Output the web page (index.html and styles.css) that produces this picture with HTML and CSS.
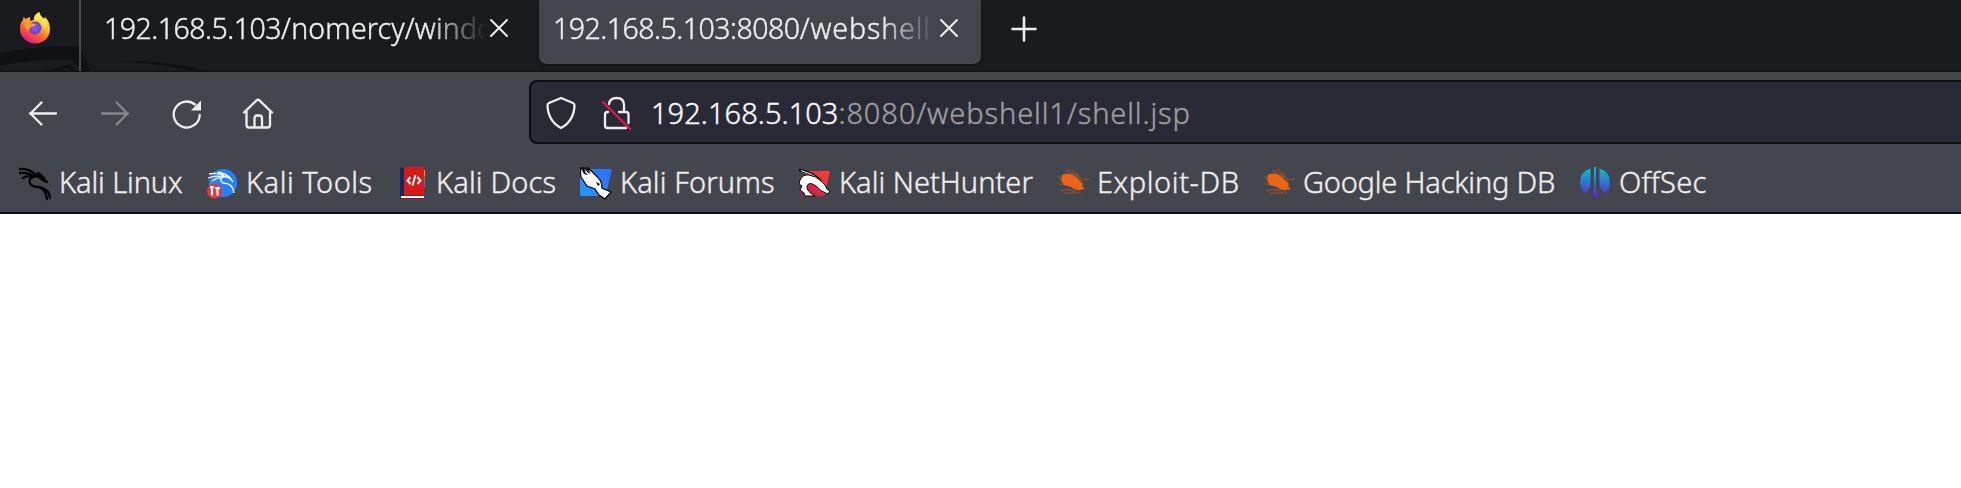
FILE: index.html
```html
<!DOCTYPE html>
<html lang="en">
<head>
<meta charset="utf-8">
<title>192.168.5.103:8080/webshell1/shell.jsp</title>
<link rel="stylesheet" href="styles.css">
</head>
<body>
<header class="tabbar">
  <svg class="dragon" width="240" height="72" viewBox="0 0 240 72"><g fill="#101114"><path d="M0 53Q42 45 80 47L91 72H83L72 60Q35 59 0 65Z"/><path d="M42 72L71 64L77 72H69L68 68L58 72Z"/><path d="M118 61Q170 60 210 72H192Q165 63 118 61Z"/></g></svg>
  <div class="pinned">
    <svg width="32" height="32" viewBox="0 0 32 32">
      <defs>
        <linearGradient id="ff" x1=".85" y1=".1" x2=".35" y2="1"><stop offset="0" stop-color="#fff04a"/><stop offset=".4" stop-color="#ffb02e"/><stop offset=".7" stop-color="#ff5a35"/><stop offset="1" stop-color="#e31587"/></linearGradient>
        <radialGradient id="fp"><stop offset="0" stop-color="#9059ff"/><stop offset="1" stop-color="#5b45c9"/></radialGradient>
      </defs>
      <path fill="url(#ff)" d="M20 0Q21 4 25 7L26 5Q31 10 31 17C31 26 24 31.500 16 31.500S1 25 1 17Q1 11 4 8L4.500 5L7 7Q10 5 11 5L11 9Q14 8 15 8Q14 3 20 0Z"/>
      <path fill="#ffe64a" d="M20 0Q21 4 25 7Q28 11 26 17Q24 9 18 8H15Q16 3 20 0Z"/>
      <circle cx="16" cy="16" r="6.500" fill="url(#fp)"/>
      <path fill="#ff9828" d="M5 11Q8 9 11 11L17 12Q16 15 12 15Q10 16 10 19Q6 16 5 11Z"/>
    </svg>
  </div>
  <div class="tab tab-idle">
    <span class="tab-title title-one">192.168.5.103<span class="path">/nomercy/windo</span></span>
    <svg class="close" width="20" height="20" viewBox="0 0 20 20"><path d="M2 2L18 18M18 2L2 18"/></svg>
  </div>
  <div class="tab tab-active">
    <span class="tab-title title-two">192.168.5.103:8080<span class="path">/webshell</span></span>
    <svg class="close" width="20" height="20" viewBox="0 0 20 20"><path d="M2 2L18 18M18 2L2 18"/></svg>
  </div>
  <svg class="plus" width="26" height="26" viewBox="0 0 26 26"><path d="M13 1.500V24.500M1.500 13H24.500"/></svg>
</header>
<nav class="navbar">
  <div class="buttons">
    <svg width="32" height="32" viewBox="0 0 32 32"><path d="M29 16.500H3M14.500 5.500L3.500 16.500L14.500 27.500"/></svg>
    <svg class="dim" width="32" height="32" viewBox="0 0 32 32"><path d="M3 16.500H29M17.500 5.500L28.500 16.500L17.500 27.500"/></svg>
    <svg width="32" height="32" viewBox="0 0 32 32"><path d="M28.700 18A13 13 0 1 1 24 7.500"/><path class="solid" d="M30 3.500V13.500H20Z"/></svg>
    <svg width="32" height="32" viewBox="0 0 32 32"><path d="M1 15.500L13.600 3.300Q15 2.100 16.400 3.300L29 15.500M3.500 14V28Q3.500 30.500 6 30.500H24.500Q27 30.500 27 28V14M11.500 30V21.500Q11.500 18.500 14 18.500H16.500Q19 18.500 19 21.500V30"/></svg>
  </div>
  <div class="urlbar">
    <svg class="shield" width="32" height="34" viewBox="0 0 32 34"><path d="M16 2L28 7Q29.500 7.700 29.500 9.500Q29 25 16 32Q3 25 2.500 9.500Q2.500 7.700 4 7Z"/></svg>
    <svg class="lock" width="30" height="34" viewBox="0 0 30 34"><path d="M8 8Q9 2 15.500 2Q23 2 23 9V15.500M18 16H25Q27.500 16 27.500 18.500V27M7 16H6.500Q4 16 4 18.500V29.500Q4 32 6.500 32H25"/><path class="slash" d="M2 6L29 33"/></svg>
    <span class="address"><span class="host">192.168.5.103</span>:8080/webshell1/shell.jsp</span>
  </div>
</nav>
<div class="bookmarks">
  <div class="bm bm-linux">
    <svg width="32" height="34" viewBox="0 0 32 34"><g fill="none" stroke="#000" stroke-linecap="round" stroke-width="2.300"><path d="M1 2Q10 1 18 9M1 6Q8 5 15 9M4 11Q9 8 14 10M18 9Q9 10 11 16Q12 20 20 20Q30 22 31 31"/><path d="M20 20Q27 23 28 32M13 10Q20 7 28 15M19 6L25 11"/></g><path d="M17 6L29 15L27 16L20 12Z"/></svg>
    <span>Kali Linux</span>
  </div>
  <div class="bm bm-tools">
    <svg width="32" height="34" viewBox="0 0 32 34"><circle cx="16" cy="16" r="14" fill="#2580fb"/><g fill="none" stroke="#fff" stroke-width="1.300"><path d="M2 7Q12 5 18 10M1 11Q9 8 17 10Q11 12 16 16Q26 16 27 26M18 10Q23 10 26 15M5 14Q10 10 14 11M11 5Q20 7 24 12"/></g><circle cx="7.500" cy="24" r="7.500" fill="#f23338"/><path fill="none" stroke="#fff" stroke-width="2.200" d="M3 20H7M5 20V28.500M8 21H13M10.500 21V28.500"/></svg>
    <span>Kali Tools</span>
  </div>
  <div class="bm bm-docs">
    <svg width="26" height="34" viewBox="0 0 26 34"><path fill="#ff9800" d="M22 3H25V9H22Z"/><path fill="#1bae57" d="M22 9H25V15H22Z"/><path fill="#2a79ef" d="M22 15H25V20H22Z"/><path fill="#8d1425" d="M1 28H24V32H1Z"/><path fill="#db1719" d="M3 0H24V28H3Z"/><path fill="#102a5b" d="M0 1L4 0V28L1 32H0Z"/><path fill="#fff" d="M1 29H24V31H1Z"/><path fill="none" stroke="#fff" stroke-width="2" d="M10.500 10L7.500 13.500L10.500 17M17.500 10L20.500 13.500L17.500 17M15.500 8L12.500 18.500"/></svg>
    <span>Kali Docs</span>
  </div>
  <div class="bm bm-forums">
    <svg width="32" height="34" viewBox="0 0 32 34"><defs><linearGradient id="fb" x1="1" y1="0" x2="0" y2="1"><stop offset="0" stop-color="#2b6cff"/><stop offset="1" stop-color="#239bff"/></linearGradient></defs><path fill="url(#fb)" d="M4 2H30Q32 2 31.500 4L26 27Q25.500 29 24 29H2Q0 29 0 27V4Z"/><path fill="#fff" stroke="#000" stroke-width="1.200" d="M0 0L5 5L3 0L9 4L7 0Q15 7 19 12Q22 15 22 21L31 25L25 32L19 28L15 22L7 19L1 10Z"/><path d="M0 0L8 8L4 7ZM3 0L11 7L8 6ZM16 15L20 17L18 19Z"/></svg>
    <span>Kali Forums</span>
  </div>
  <div class="bm bm-hunter">
    <svg width="32" height="34" viewBox="0 0 32 34"><defs><linearGradient id="nh" x1="1" y1="0" x2="0" y2="1"><stop offset="0" stop-color="#ff4032"/><stop offset=".6" stop-color="#e32640"/><stop offset="1" stop-color="#9d135e"/></linearGradient></defs><path fill="url(#nh)" d="M8 4H29Q31 4 30.500 6L26 27Q25 29 23 29H3Q0 29 1 26Z"/><path fill="none" stroke="#000" stroke-width="2.500" d="M0 3Q13 5 22 14"/><path fill="none" stroke="#fff" d="M2 3.500Q13 6 22 14"/><path fill="#fff" stroke="#000" stroke-width="1" d="M1 13Q4 7 10 8Q17 9 22 14L26 18L28 22L31 24L29 27Q22 25 17 19Q10 14 8 19Q7 24 16 29L6 29L5 26L1 23L3 19L0 17Z"/></svg>
    <span>Kali NetHunter</span>
  </div>
  <div class="bm bm-exploit">
    <svg width="32" height="34" viewBox="0 0 32 34"><path class="legs" d="M9 3L22 11M14 2L24 12M20 6L25 15M1 9L6 14M2 17L10 18M3 24Q12 20 20 26M7 26H20M23 13L32 12M21 22L23 27"/><path class="bug" d="M5 8Q12 4 19 10L23 14L26 17L25 19L28 22L22 23Q17 23 14 20L7 18Q3 14 5 8Z"/></svg>
    <span>Exploit-DB</span>
  </div>
  <div class="bm bm-google">
    <svg width="32" height="34" viewBox="0 0 32 34"><path class="legs" d="M9 3L22 11M14 2L24 12M20 6L25 15M1 9L6 14M2 17L10 18M3 24Q12 20 20 26M7 26H20M23 13L32 12M21 22L23 27"/><path class="bug" d="M5 8Q12 4 19 10L23 14L26 17L25 19L28 22L22 23Q17 23 14 20L7 18Q3 14 5 8Z"/></svg>
    <span>Google Hacking DB</span>
  </div>
  <div class="bm bm-offsec">
    <svg width="30" height="34" viewBox="0 0 30 34"><defs><linearGradient id="os" gradientUnits="userSpaceOnUse" x1="0" y1="2" x2="0" y2="31"><stop offset="0" stop-color="#0cbccd"/><stop offset=".55" stop-color="#3568d1"/><stop offset="1" stop-color="#6519d0"/></linearGradient></defs><path fill="url(#os)" d="M10.500 1.500V19L6 27Q0 23 0 15.500Q0 5 10.500 1.500ZM19.500 1.500V19L24.500 27Q30 23 30 15.500Q30 5 19.500 1.500ZM14 0H16V20L18 30H12L14 20Z"/></svg>
    <span>OffSec</span>
  </div>
</div>
<main class="page"></main>
</body>
</html>
```
FILE: styles.css
```css
* { box-sizing: border-box; }
body {
  margin: 0;
  width: 1961px;
  height: 488px;
  overflow: hidden;
  background: #fff;
  color: #eeeeec;
  font: 300 29px/40px "Noto Sans", sans-serif;
  -webkit-text-stroke: 0.4px currentColor;
}
svg { display: block; flex: none; }
.tabbar {
  position: relative;
  display: flex;
  height: 72px;
  background: #1a1b1f;
  border-bottom: 1px solid #111216;
}
.dragon { position: absolute; left: 0; top: 0; }
.pinned {
  position: relative;
  width: 81px;
  padding: 12px 0 0 19px;
  border-right: 2px solid #4b4c52;
}
.tab {
  position: relative;
  display: flex;
  height: 64px;
  padding-top: 8px;
}
.tab-idle { width: 458px; padding-left: 23px; }
.tab-active {
  width: 442px;
  padding-left: 14px;
  border-radius: 0 0 8px 8px;
  background: #44464d;
  box-shadow: 0 0 3px #0c0d10;
}
.tab-title {
  overflow: hidden;
  white-space: nowrap;
  font-size: 28.5px;
  letter-spacing: -0.5px;
  mask-image: linear-gradient(to right, #000 calc(100% - 56px), transparent);
}
.title-one { width: 382px; }
.title-two { width: 383px; }
.title-one .path { letter-spacing: 0.15px; }
.title-two .path { letter-spacing: 0.9px; }
.close { margin: 10px 0 0 3px; }
.close, .plus { fill: none; stroke: #eeeeec; stroke-width: 2; stroke-linecap: round; }
.plus { margin: 16px 0 0 30px; stroke-width: 2.6; }
.navbar {
  display: flex;
  height: 86px;
  padding-top: 8px;
  background: #44464d;
}
.buttons {
  display: flex;
  gap: 40px;
  width: 529px;
  padding: 17px 0 0 27px;
  fill: none;
  stroke: #eeeeec;
  stroke-width: 2.3;
  stroke-linecap: round;
  stroke-linejoin: round;
}
.buttons .dim { stroke: #87888b; }
.buttons .solid { fill: #eeeeec; stroke: none; }
.urlbar {
  display: flex;
  flex: 1;
  height: 64px;
  border: 2px solid #0c0d11;
  border-right: 0;
  border-radius: 8px 0 0 8px;
  background: #282a36;
  fill: none;
  stroke: #eeeeec;
  stroke-width: 2.3;
  stroke-linecap: round;
  stroke-linejoin: round;
}
.shield { margin: 14px 0 0 14px; }
.lock { margin: 14px 0 0 24px; }
.urlbar .slash { stroke: #ed1443; }
.address {
  margin: 11px 0 0 20px;
  color: #9d9e9f;
  stroke: none;
  white-space: nowrap;
  letter-spacing: 0.88px;
}
.host { color: #fbfbfe; letter-spacing: 0.05px; }
.bookmarks {
  display: flex;
  height: 56px;
  padding: 7px 0 0 19px;
  background: #44464d;
  border-bottom: 2px solid #0c0d11;
}
.bm { display: flex; white-space: nowrap; }
.bm svg { margin-top: 2px; }
.bm span { margin: -3px 0 0 8px; }
.bm-linux { width: 188px; letter-spacing: -0.1px; }
.bm-tools { width: 193px; letter-spacing: 0.5px; }
.bm-tools span { margin-left: 7px; }
.bm-docs { width: 180px; letter-spacing: 0.15px; }
.bm-docs span { margin-left: 10px; }
.bm-forums { width: 219px; letter-spacing: 0.1px; }
.bm-hunter { width: 258px; letter-spacing: 0.02px; }
.bm-exploit { width: 206px; letter-spacing: 0.58px; }
.bm-google { width: 317px; letter-spacing: -0.2px; }
.bm-offsec { letter-spacing: 0.3px; }
.bm-offsec span { margin-left: 9px; }
.bug { fill: #ed6314; }
.legs { fill: none; stroke: #ed6314; stroke-width: 1.5; opacity: .35; }
.page { height: 274px; background: #fff; }
```
